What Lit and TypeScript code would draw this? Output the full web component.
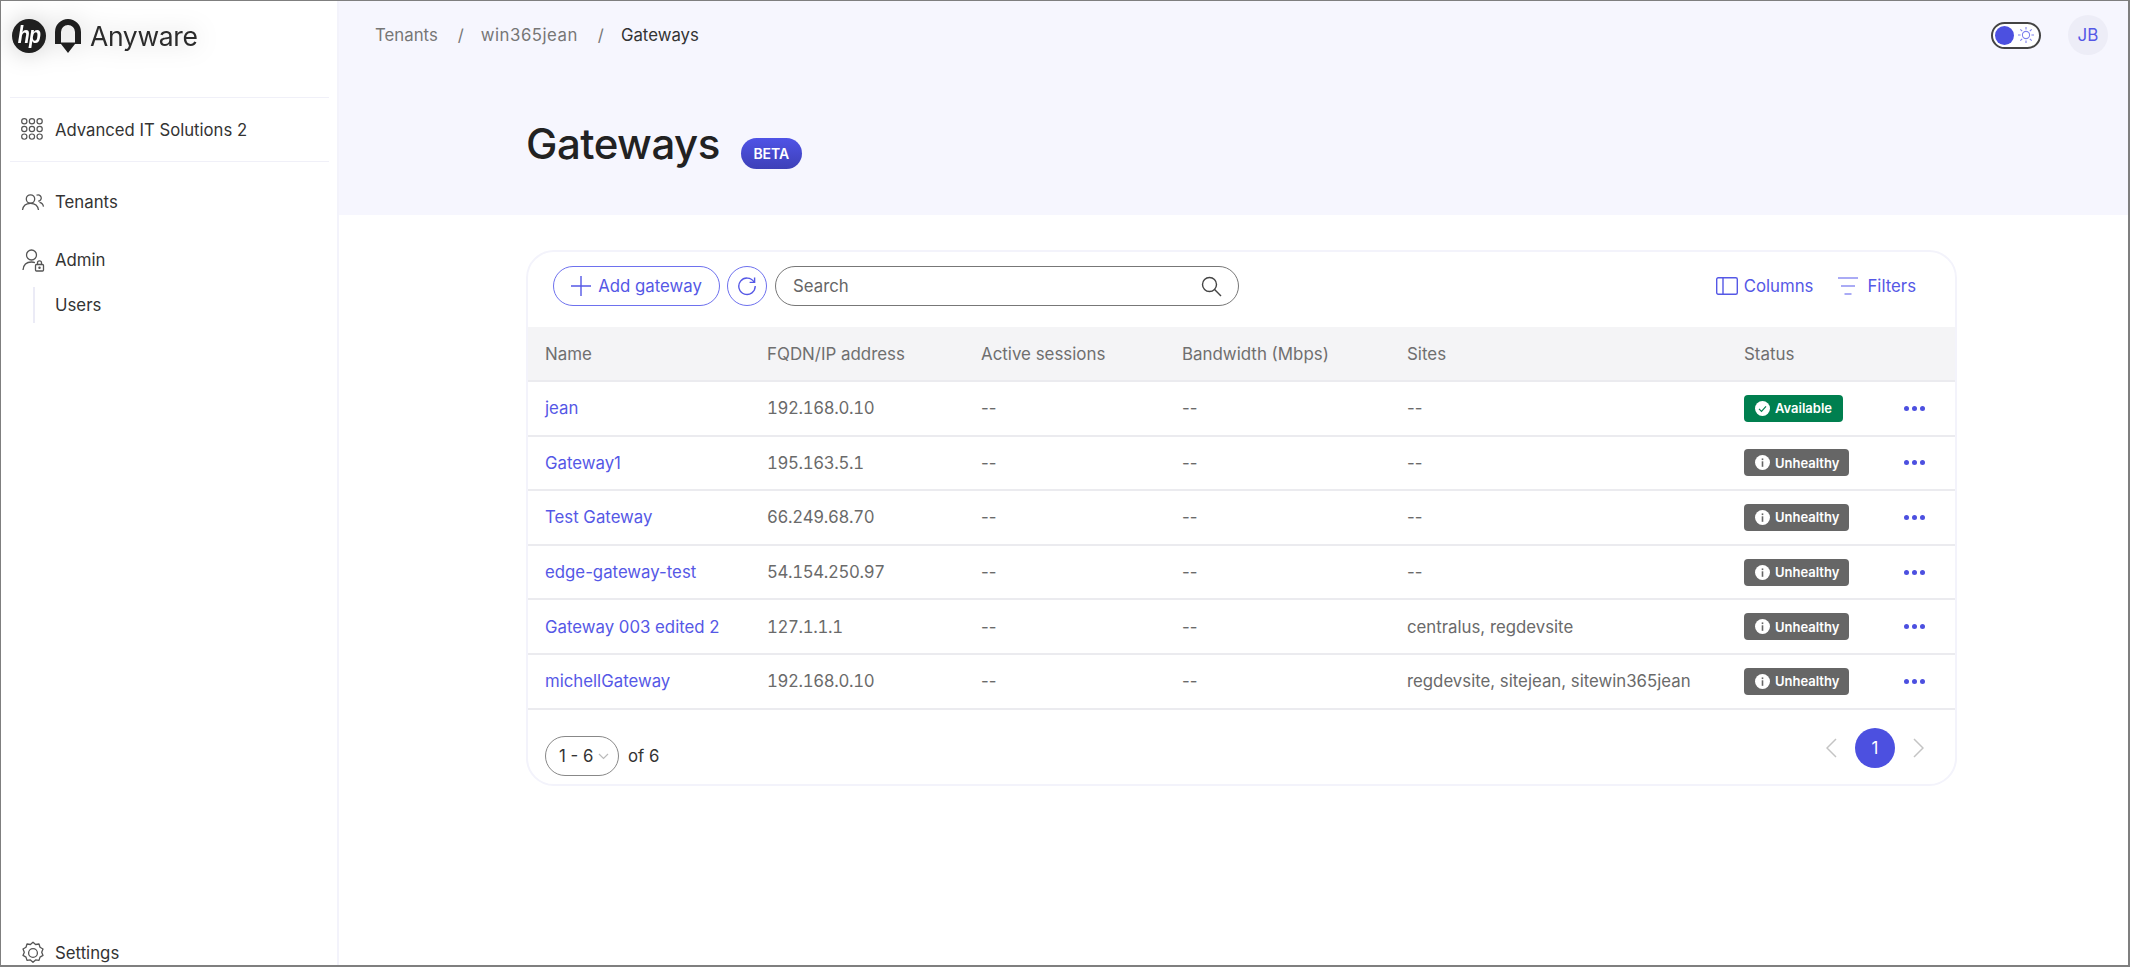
import { LitElement, html, css, svg } from "lit";
import { customElement } from "lit/decorators.js";

interface Row { name: string; ip: string; sites: string; ok: boolean }
const rows: Row[] = [
  { name: "jean", ip: "192.168.0.10", sites: "--", ok: true },
  { name: "Gateway1", ip: "195.163.5.1", sites: "--", ok: false },
  { name: "Test Gateway", ip: "66.249.68.70", sites: "--", ok: false },
  { name: "edge-gateway-test", ip: "54.154.250.97", sites: "--", ok: false },
  { name: "Gateway 003 edited 2", ip: "127.1.1.1", sites: "centralus, regdevsite", ok: false },
  { name: "michellGateway", ip: "192.168.0.10", sites: "regdevsite, sitejean, sitewin365jean", ok: false },
];

const gridDots = [0, 1, 2].flatMap((r) => [0, 1, 2].map((c) => svg`<circle cx=${3 + c * 7} cy=${3 + r * 7} r="2.4"/>`));

@customElement("app-root")
export class AppRoot extends LitElement {
  static styles = css`
    :host {
      display: flex;
      box-sizing: border-box;
      width: 2130px;
      height: 967px;
      border: 1px solid #7f7f7f;
      border-right-width: 2px;
      border-bottom-width: 2px;
      background: #fff;
      font-family: Inter, "Noto Sans", sans-serif;
      font-size: 16.8px;
      color: #333;
      overflow: hidden;
    }
    svg { display: block; flex: none; }
    .side {
      width: 338px;
      flex: none;
      box-sizing: border-box;
      border-right: 2px solid #f3f3fb;
      display: flex;
      flex-direction: column;
    }
    .logo {
      height: 96px;
      display: flex;
      align-items: flex-start;
      padding: 18px 0 0 11px;
      box-sizing: border-box;
    }
    .logo-inner {
      display: flex;
      align-items: center;
      gap: 9px;
      filter: drop-shadow(0 0 12px rgba(0, 0, 0, 0.2));
    }
    .word { font-size: 26.5px; color: #2b2b2b; line-height: 34px; letter-spacing: -0.35px; }
    .rule { height: 1px; background: #f0f0f8; margin: 0 8px 0 9px; }
    .org { height: 63px; font-size: 16.7px; }
    .item { display: flex; align-items: center; gap: 10px; padding-left: 20px; }
    .item svg { width: 24px; height: 24px; fill: none; stroke: #555; stroke-width: 1.3; }
    .t1 { height: 32px; margin-top: 24px; }
    .t2 { height: 32px; margin-top: 26px; }
    .sub {
      margin: 11px 0 0 32px;
      border-left: 2px solid #ebebf6;
      height: 36px;
      padding-left: 20px;
      display: flex;
      align-items: center;
    }
    .spacer { flex: 1; }
    .settings { height: 32px; margin-bottom: -4px; }
    .main { flex: 1; min-width: 0; display: flex; flex-direction: column; }
    .head { height: 214px; background: #f6f6fe; box-sizing: border-box; padding-top: 14px; flex: none; }
    .topbar { display: flex; align-items: center; height: 40px; padding: 0 20px 0 36px; }
    .crumbs { flex: 1; display: flex; align-items: center; color: #767676; }
    .crumbs .sep { margin: 0 17px 0 20px; }
    .crumbs .num { letter-spacing: 0.5px; }
    .crumbs .cur { color: #333; }
    .toggle {
      box-sizing: border-box;
      width: 50px;
      height: 27px;
      border: 2px solid #444;
      border-radius: 14px;
      background: #fff;
      display: flex;
      align-items: center;
      padding-left: 2px;
      gap: 3px;
    }
    .knob { width: 19px; height: 19px; border-radius: 50%; background: #4c50e0; }
    .avatar {
      width: 40px;
      height: 40px;
      border-radius: 50%;
      background: #ededf7;
      color: #5558e6;
      display: grid;
      place-items: center;
      margin-left: 27px;
      font-size: 17px;
    }
    .title { display: flex; align-items: center; margin: 58px 0 0 187px; height: 60px; }
    h1 { margin: 0; font-size: 42px; font-weight: 500; color: #222; letter-spacing: -0.5px; }
    .beta {
      margin-left: 21px;
      margin-top: 20px;
      width: 61px;
      height: 31px;
      border-radius: 16px;
      background: linear-gradient(#4f53e6, #3d40b8);
      color: #fff;
      font-size: 14px;
      font-weight: 600;
      display: grid;
      place-items: center;
    }
    .card {
      box-sizing: border-box;
      margin: 35px 0 0 187px;
      width: 1431px;
      height: 536px;
      border: 2px solid #f3f3fb;
      border-radius: 28px;
      display: flex;
      flex-direction: column;
    }
    .tools { height: 75px; flex: none; display: flex; align-items: center; padding: 0 39px 8px 25px; box-sizing: border-box; }
    .btn {
      box-sizing: border-box;
      height: 40px;
      border: 1.5px solid #6e71ee;
      border-radius: 20px;
      color: #5558e6;
      display: flex;
      align-items: center;
      justify-content: center;
    }
    .add { width: 167px; gap: 7px; }
    .refresh { width: 40px; margin-left: 7px; }
    .btn svg, .link svg { fill: none; stroke: #5558e6; stroke-width: 1.4; }
    .search {
      box-sizing: border-box;
      width: 464px;
      height: 40px;
      margin-left: 8px;
      border: 1.5px solid #777;
      border-radius: 20px;
      display: flex;
      align-items: center;
      padding: 0 16px 0 17px;
      color: #666;
      justify-content: space-between;
    }
    .search svg { fill: none; stroke: #444; stroke-width: 1.4; }
    .grow { flex: 1; }
    .link { display: flex; align-items: center; gap: 6px; color: #5558e6; }
    .link + .link { margin-left: 25px; gap: 9px; }
    .grid {
      display: grid;
      grid-template-columns: 222px 214px 201px 225px 337px 160px 1fr;
      padding-left: 17px;
      align-items: center;
      box-sizing: border-box;
    }
    .th { height: 55px; background: #f4f4f6; border-bottom: 2px solid #ebebef; color: #6f6f6f; flex: none; font-size: 16.9px; }
    .tr { height: 54.6px; border-bottom: 2px solid #ebebef; color: #6a6a6a; flex: none; }
    .name { color: #5558e6; }
    .ip { font-feature-settings: "tnum"; letter-spacing: -0.35px; }
    .badge {
      display: inline-flex;
      align-items: center;
      height: 27px;
      padding: 0 10px 0 11px;
      border-radius: 4px;
      color: #fff;
      font-size: 13px;
      font-weight: 600;
      gap: 5px;
      background: #666;
    }
    .badge.ok { background: #007f4f; padding-right: 11px; }
    .badge svg { width: 15px; height: 15px; }
    .dots { display: flex; gap: 3px; }
    .dots i { width: 5px; height: 5px; border-radius: 50%; background: #4c50e0; display: block; }
    .foot { flex: 1; display: flex; align-items: center; padding: 3px 31px 0 17px; }
    .left { display: flex; align-items: center; margin-top: 16px; }
    .sel {
      box-sizing: border-box;
      width: 74px;
      height: 40px;
      border: 1.5px solid #888;
      border-radius: 20px;
      display: flex;
      align-items: center;
      padding-left: 13px;
      gap: 5px;
      color: #333;
    }
    .sel svg { fill: none; stroke: #bbb; stroke-width: 1.2; }
    .of { margin-left: 9px; color: #333; }
    .prev, .next { fill: none; stroke: #c4c4c4; stroke-width: 1.5; }
    .page {
      width: 40px;
      height: 40px;
      border-radius: 50%;
      background: #4c50e0;
      color: #fff;
      display: grid;
      place-items: center;
      margin: 0 18px;
    }
  `;

  private badge(ok: boolean) {
    return ok
      ? html`<span class="badge ok"><svg viewBox="0 0 15 15"><circle cx="7.5" cy="7.5" r="7.5" fill="#fff"/><path d="M4 7.8l2.5 2.5 4.5-5" fill="none" stroke="#007f4f" stroke-width="1.2"/></svg>Available</span>`
      : html`<span class="badge"><svg viewBox="0 0 15 15"><circle cx="7.5" cy="7.5" r="7.5" fill="#fff"/><rect x="6.7" y="6.3" width="1.6" height="5.5" fill="#666"/><rect x="6.7" y="3.4" width="1.6" height="1.7" fill="#666"/></svg>Unhealthy</span>`;
  }

  render() {
    return html`
      <aside class="side">
        <div class="logo">
          <div class="logo-inner">
            <svg width="34" height="34" viewBox="0 0 34 34"><circle cx="17" cy="17" r="17" fill="#1f1f1f"/><text transform="translate(17 23.5) scale(.82 1)" text-anchor="middle" font-family="Liberation Sans" font-style="italic" font-weight="700" font-size="24" fill="#fff" letter-spacing="-1">hp</text></svg>
            <svg width="26" height="34" viewBox="0 0 26 34"><path fill="#1f1f1f" fill-rule="evenodd" d="M0 25V13a13 13 0 0 1 26 0v12h-6l-7 9-7-9zM6 23.5V13a7 7 0 0 1 14 0v10.500z"/></svg>
            <span class="word">Anyware</span>
          </div>
        </div>
        <div class="rule"></div>
        <div class="item org">
          <svg viewBox="0 0 21 21" style="stroke-width:1.1;width:23px;height:23px;margin-right:1px">${gridDots}</svg>
          <span>Advanced IT Solutions 2</span>
        </div>
        <div class="rule"></div>
        <div class="item t1">
          <svg viewBox="0 0 24 24"><circle cx="9.5" cy="9" r="4.2"/><path d="M1.5 20c.6-4.2 3.6-6.6 8-6.6s7.4 2.4 8 6.6"/><path d="M15.5 5.2a3.2 3.2 0 1 1 1.7 6"/><path d="M18.500 12.400c2.200.4 3.600 2 4 4.200"/></svg>
          <span>Tenants</span>
        </div>
        <div class="item t2">
          <svg viewBox="0 0 24 24"><circle cx="10.5" cy="7" r="5"/><path d="M2 22c.4-5 3.4-8 8.500-8 1.300 0 2.400.2 3.400.6"/><rect x="14.5" y="16.5" width="8" height="6.5" rx="1"/><path d="M16.500 16.500v-1.700a2 2 0 0 1 4 0v1.700"/><circle cx="18.5" cy="19.7" r=".6"/></svg>
          <span>Admin</span>
        </div>
        <div class="sub">Users</div>
        <div class="spacer"></div>
        <div class="item settings">
          <svg viewBox="0 0 24 24"><circle cx="12" cy="12" r="4.4"/><path d="M12 1.2l2.6 2.3 3.4-.5 1 3.3 3 1.7-1.300 3.200 1.300 3.200-3 1.700-1 3.300-3.400-.5-2.600 2.300-2.600-2.300-3.400.5-1-3.300-3-1.700 1.300-3.200-1.300-3.200 3-1.700 1-3.300 3.400.5z" stroke-linejoin="round"/></svg>
          <span>Settings</span>
        </div>
      </aside>
      <div class="main">
        <header class="head">
          <div class="topbar">
            <div class="crumbs">
              <span>Tenants</span><span class="sep">/</span><span class="num">win365jean</span><span class="sep">/</span><span class="cur">Gateways</span>
            </div>
            <div class="toggle">
              <span class="knob"></span>
              <svg width="18" height="18" viewBox="0 0 18 18" fill="none" stroke="#7d80ee" stroke-width="1.1"><circle cx="9" cy="9" r="3.6"/><path d="M9 1v2.6M9 14.4V17M1 9h2.6M14.4 9H17M3.3 3.3l1.900 1.900M12.800 12.800l1.900 1.900M3.300 14.700l1.900-1.900M12.800 5.200l1.900-1.900"/></svg>
            </div>
            <div class="avatar">JB</div>
          </div>
          <div class="title"><h1>Gateways</h1><span class="beta">BETA</span></div>
        </header>
        <section class="card">
          <div class="tools">
            <div class="btn add">
              <svg width="20" height="20" viewBox="0 0 20 20"><path d="M10 0v20M0 10h20"/></svg>
              <span>Add gateway</span>
            </div>
            <div class="btn refresh">
              <svg width="20" height="20" viewBox="0 0 20 20"><path d="M17 6a8.2 8.2 0 1 0 1.2 4"/><path d="M17.600 1.500V6.400h-5"/></svg>
            </div>
            <div class="search">
              <span>Search</span>
              <svg width="22" height="22" viewBox="0 0 22 22"><circle cx="9.5" cy="9.5" r="7"/><path d="M14.600 14.600L21 21"/></svg>
            </div>
            <div class="grow"></div>
            <div class="link">
              <svg width="22" height="18" viewBox="0 0 22 18"><rect x=".7" y=".7" width="20.6" height="16.6" rx="1.5"/><path d="M7 .7v16.600"/></svg>
              <span>Columns</span>
            </div>
            <div class="link">
              <svg width="20" height="18" viewBox="0 0 20 18" style="stroke:#8e90f2;stroke-width:1.6"><path d="M0 1h20M3 9h14M6.500 17h7"/></svg>
              <span>Filters</span>
            </div>
          </div>
          <div class="grid th">
            <span>Name</span><span>FQDN/IP address</span><span>Active sessions</span><span>Bandwidth (Mbps)</span><span>Sites</span><span>Status</span><span></span>
          </div>
          ${rows.map(
            (r) => html`<div class="grid tr">
              <span class="name">${r.name}</span><span class="ip">${r.ip}</span><span>--</span><span>--</span><span>${r.sites}</span>
              <span>${this.badge(r.ok)}</span>
              <span class="dots"><i></i><i></i><i></i></span>
            </div>`
          )}
          <div class="foot">
            <div class="left">
              <div class="sel"><span>1 - 6</span><svg width="11" height="7" viewBox="0 0 11 7"><path d="M1 1l4.500 4.500L10 1"/></svg></div>
              <span class="of">of 6</span>
            </div>
            <div class="grow"></div>
            <svg class="prev" width="11" height="20" viewBox="0 0 11 20"><path d="M10 1L1 10l9 9"/></svg>
            <div class="page">1</div>
            <svg class="next" width="11" height="20" viewBox="0 0 11 20"><path d="M1 1l9 9-9 9"/></svg>
          </div>
        </section>
      </div>
    `;
  }
}
